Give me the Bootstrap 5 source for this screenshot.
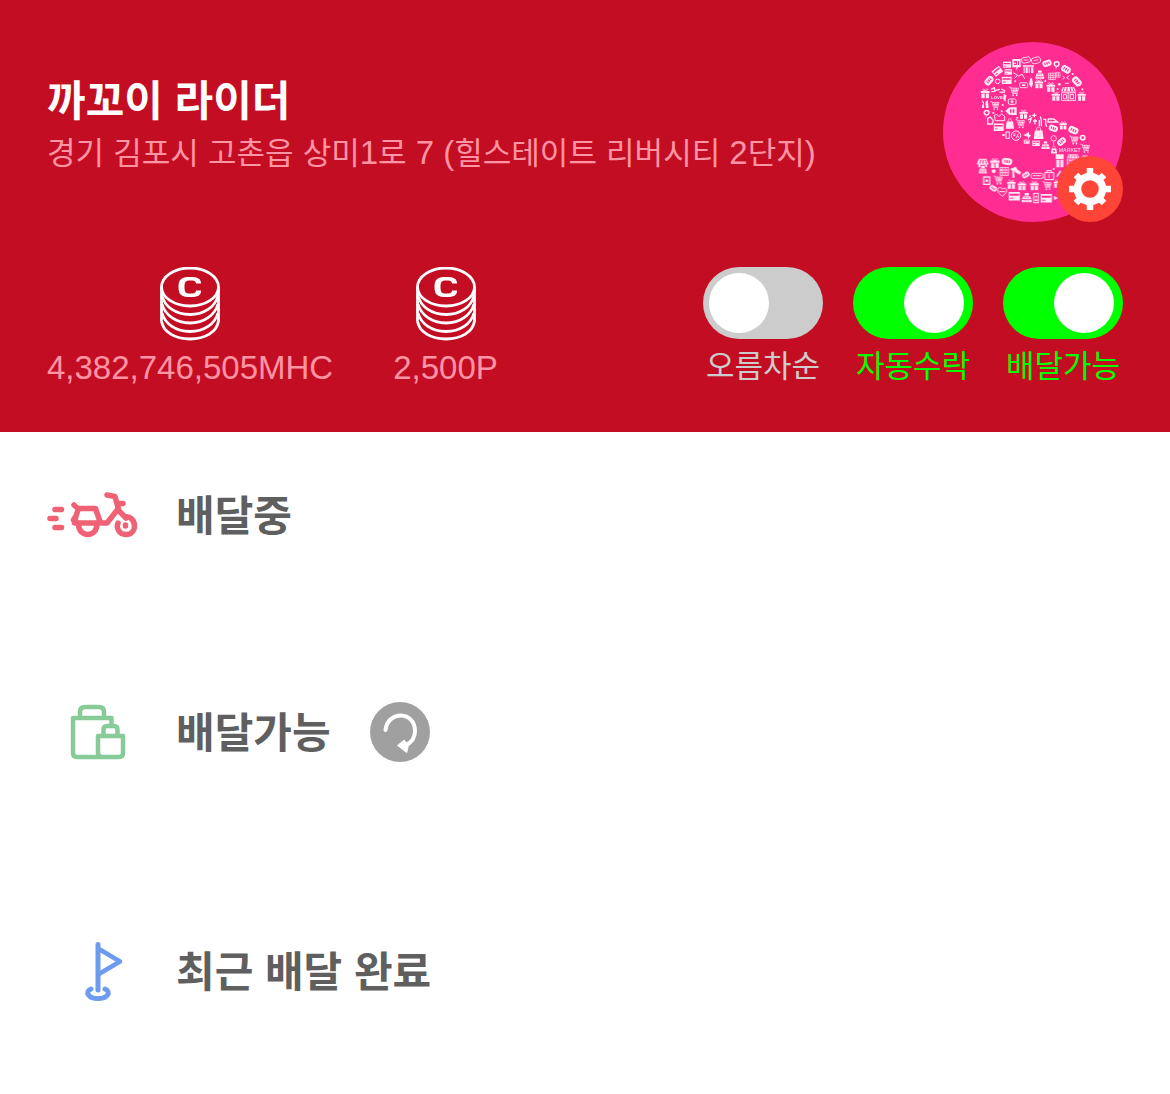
<!DOCTYPE html>
<html lang="ko">
<head>
<meta charset="utf-8">
<meta name="viewport" content="width=device-width, initial-scale=1">
<title>까꼬이 라이더</title>
<link href="https://cdn.jsdelivr.net/npm/bootstrap@5.3.0/dist/css/bootstrap.min.css" rel="stylesheet">
<style>
  body { font-family: "Liberation Sans", "Noto Sans CJK KR", sans-serif; color: #5f5f5f; background: #fff; }
  .rider-header { background: #c30d23; padding: 42px 47px 40px; }
  .rider-title { padding-top: 33px; }
  .rider-name { font-size: 42px; line-height: 54px; font-weight: 700; color: #fff; margin: 0; }
  .rider-info { font-size: 33px; line-height: 48px; color: #ff94a4; margin: 0; }
  .ko { font-size: 31px; line-height: 1; }
  .avatar { width: 180px; height: 180px; }
  .gear-btn { width: 66px; height: 66px; }
  .stat-row { margin-top: 45px; }
  .wallets { gap: 60px; }
  .coin { width: 60px; height: 74px; }
  .wallet-value { line-height: 48px; margin-top: 3px; }
  .toggles { gap: 30px; }
  .toggle-item { width: 120px; }
  .form-check-input.toggle-input { width: 120px; height: 72px; margin: 0; border: 0; border-radius: 36px; background: #ccc; cursor: pointer; }
  .toggle-input::before { content: ""; display: block; width: 60px; height: 60px; margin: 6px; border-radius: 50%; background: #fff; }
  .form-check-input.toggle-input:checked { background: #0f0; }
  .toggle-input:checked::before { margin-left: 51px; }
  .toggle-text { font-size: 31px; line-height: 42px; margin-top: 7px; color: #ccc; white-space: nowrap; }
  .toggle-input:checked + .toggle-text { color: #0f0; }
  .board { padding: 23px 47px 0; }
  .board-section { padding-top: 30px; min-height: 217px; }
  .board-section.has-refresh { min-height: 239px; }
  .board-section:last-child { min-height: 180px; }
  .section-head { height: 60px; gap: 39px; }
  .section-head h2 { font-size: 42px; line-height: 56px; font-weight: 700; margin: 0; padding-top: 4px; }
  .section-icon { width: 90px; height: 60px; }
  .refresh-btn, .refresh-btn svg { width: 60px; height: 60px; }
</style>
<script src="https://cdn.jsdelivr.net/npm/bootstrap@5.3.0/dist/js/bootstrap.bundle.min.js"></script>
</head>
<body>
<svg width="0" height="0" class="position-absolute" aria-hidden="true">
  <symbol id="coins" viewBox="0 0 60 74">
    <g fill="none" stroke="#fff" stroke-width="2.8">
      <ellipse cx="30" cy="20" rx="28.5" ry="19"/>
      <path d="M1.500 20V54C3 65 15 72 30 72S57 65 58.500 54V20"/>
      <path d="M2 29C5 40 16 47.500 30 47.500S55 40 58 29M2 37C5 48 16 56 30 56S55 48 58 37M2 46C5 57 16 64.500 30 64.500S55 57 58 46"/>
    </g>
    <path fill="#fff" d="M30 10C21 10 18.500 12.500 18.500 20S21 30 30 30C38 30 41 28.500 41 23.500H36C36 26 34 26.500 30 26.500C25.500 26.500 24.500 25 24.500 20S25.500 13.500 30 13.500C34 13.500 36 14 36 16.500H41C41 11.500 38 10 30 10Z"/>
  </symbol>
  <symbol id="gift" viewBox="0 0 28 30"><path d="M1 8H27V14H1ZM3 15.500H12.500V29H3ZM15.500 15.500H25V29H15.500Z"/><path d="M14 8C5 8 5 1 10 2C13 3 14 8 14 8C14 8 15 3 18 2C23 1 23 8 14 8" fill="none" stroke="#fff" stroke-width="2"/></symbol>
  <symbol id="cart" viewBox="0 0 30 30"><path d="M1 3H6L11 21H26M7 6H28L25 17H10M13 6L15 17M18 6V17M23 6L21 17M8 12H27" fill="none" stroke="#fff" stroke-width="2.2"/><circle cx="13" cy="26" r="2.5"/><circle cx="23" cy="26" r="2.5"/></symbol>
  <symbol id="card" viewBox="0 0 34 26"><path fill-rule="evenodd" d="M1 1H33V25H1ZM4 6V11H30V6ZM5 17V20H14V17Z"/></symbol>
  <symbol id="bag" viewBox="0 0 28 34"><path d="M4 11H24L27 33H1Z"/><path d="M9 14V6C9 0 19 0 19 6V14" fill="none" stroke="#fff" stroke-width="2"/></symbol>
  <symbol id="coupon" viewBox="0 0 32 22"><path fill-rule="evenodd" d="M9 1H23C34 1 34 21 23 21H9C-2 21-2 1 9 1ZM8 7V15H11V7ZM14 7V15H18V7ZM21 7V15H24V7Z"/></symbol>
  <symbol id="pin" viewBox="0 0 24 30"><path fill-rule="evenodd" d="M12 1C26 1 25 18 12 21L9 29V20C-2 15 0 1 12 1ZM12 6A5 5 0 1 0 12.100 6Z"/></symbol>
  <symbol id="shop" viewBox="0 0 50 46"><path d="M8 1H42L49 15H1Z"/><path d="M3 19H47V44H3ZM24 19V44M9 25H19V38H9ZM30 25H41V38H30Z" fill="none" stroke="#fff" stroke-width="3"/><path d="M12 2L8 15M21 2L19 15M30 2L32 15M38 2L43 15" stroke="#ff2d92" stroke-width="3"/></symbol>
  <symbol id="till" viewBox="0 0 30 30"><path d="M1 22H29V29H1ZM5 12H25L28 20H2ZM9 3H21V10H9Z"/><path d="M8 16H22M8 25H22" stroke="#ff2d92" stroke-width="2" stroke-dasharray="3 2"/></symbol>
  <symbol id="grid" viewBox="0 0 30 28"><path d="M2 2H28V26H2ZM2 10H28M2 18H28M10 2V26M19 2V26" fill="none" stroke="#fff" stroke-width="2.5"/></symbol>
</svg>

<header class="rider-header">
  <div class="d-flex justify-content-between align-items-start">
    <div class="rider-title">
      <h1 class="rider-name">까꼬이 라이더</h1>
      <p class="rider-info"><span class="ko">경기</span> <span class="ko">김포시</span> <span class="ko">고촌읍</span> <span class="ko">상미</span>1<span class="ko">로</span> 7 (<span class="ko">힐스테이트</span> <span class="ko">리버시티</span> 2<span class="ko">단지</span>)</p>
    </div>
    <div class="avatar position-relative flex-shrink-0">
      <svg class="d-block w-100 h-100" viewBox="39 36 540 540" role="img" aria-label="프로필 사진" fill="#fff">
        <circle cx="309" cy="306" r="270" fill="#ff2d92"/>
        <g opacity=".9">
          <use href="#card" x="218" y="94" width="26" height="20"/>
          <path fill-rule="evenodd" d="M247 87H272V112H264L259 121V112H247ZM252 93V98H258V101H252V105H261V93ZM264 93V105H267V93Z"/>
          <g fill="none" stroke="#fff" stroke-width="2.5"><rect x="275" y="82" width="26" height="16" rx="5" transform="rotate(-12 288 90)"/><rect x="304" y="82" width="28" height="18" rx="8" transform="rotate(-15 318 91)"/><path d="M281 90H295M311 92L325 89"/></g>
          <use href="#coupon" x="336" y="87" width="30" height="26" transform="rotate(-18 351 100)"/>
          <use href="#pin" x="368" y="92" width="24" height="28"/>
          <use href="#coupon" x="392" y="106" width="32" height="24" transform="rotate(30 408 118)"/>
          <use href="#coupon" x="424" y="142" width="34" height="25" transform="rotate(48 441 154)"/>
          <path d="M278 106H312V110H278ZM281 112H284V129H281ZM287 112H293V129H287ZM296 112H299V129H296ZM303 112H310V129H303Z"/>
          <use href="#till" x="315" y="119" width="29" height="28"/>
          <use href="#grid" x="354" y="124" width="24" height="30"/><use href="#grid" x="374" y="120" width="18" height="29"/>
          <path d="M398 138L404 143L398 148M418 137L410 143L418 149M405 160H417" fill="none" stroke="#fff" stroke-width="2.5"/>
          <use href="#card" x="187" y="112" width="30" height="24" transform="rotate(-38 202 124)"/>
          <use href="#card" x="222" y="117" width="26" height="18"/>
          <path d="M250 128L267 139L276 132L284 146M254 145L262 136" fill="none" stroke="#fff" stroke-width="3"/>
          <use href="#coupon" x="161" y="139" width="32" height="26" transform="rotate(-48 177 152)"/>
          <circle cx="203" cy="154" r="7" fill="none" stroke="#fff" stroke-width="3"/>
          <use href="#card" x="214" y="139" width="32" height="24"/>
          <rect x="269" y="158" width="24" height="15" rx="4" fill="none" stroke="#fff" stroke-width="2.5"/><path d="M276 163H286V168H276Z"/>
          <path d="M301 145H306L309 162L304 174L297 162Z"/>
          <use href="#gift" x="313" y="147" width="28" height="29"/>
          <use href="#gift" x="347" y="156" width="31" height="30"/>
          <circle cx="256" cy="154" r="3"/><circle cx="346" cy="153" r="3"/><circle cx="428" cy="132" r="3"/><circle cx="388" cy="163" r="4"/><circle cx="457" cy="178" r="3"/><circle cx="383" cy="177" r="3"/>
          <use href="#gift" x="151" y="174" width="29" height="32"/>
          <path d="M183 178L193 173L195 184L184 185M197 181L210 178M214 177L226 183M208 187L225 186" fill="none" stroke="#fff" stroke-width="4"/>
          <use href="#cart" x="235" y="168" width="33" height="32"/>
          <text x="183" y="206" font-size="13" font-weight="700" font-family="Liberation Sans, sans-serif">LOVE</text>
          <path d="M221 192L229 196L226 216L220 207Z"/>
          <rect x="235" y="207" width="23" height="16" rx="4" fill="none" stroke="#fff" stroke-width="3"/><circle cx="246" cy="215" r="4"/>
          <use href="#gift" x="363" y="184" width="29" height="29"/>
          <use href="#shop" x="391" y="170" width="49" height="44"/>
          <use href="#gift" x="441" y="184" width="28" height="29"/>
          <path d="M154 209L162 216V234H155L159 219ZM166 219L173 208L176 234H168Z"/>
          <use href="#cart" x="178" y="212" width="33" height="29"/>
          <use href="#pin" x="158" y="238" width="24" height="28"/>
          <path fill-rule="evenodd" d="M226 243L238 232H260V255H238ZM240 238V248H244V238ZM248 238V248H253V238Z"/>
          <use href="#gift" x="266" y="238" width="29" height="29"/>
          <circle cx="218" cy="225" r="3"/><circle cx="215" cy="244" r="3"/><circle cx="262" cy="263" r="3"/><circle cx="190" cy="249" r="3"/><circle cx="300" cy="259" r="3"/>
          <path d="M173 265L181 261L190 272L187 282H173Z" fill="none" stroke="#fff" stroke-width="4"/>
          <path d="M193 256L200 253L207 260L215 252L224 259V272H196Z" fill="none" stroke="#fff" stroke-width="3"/>
          <use href="#card" x="190" y="278" width="32" height="27"/>
          <use href="#bag" x="226" y="264" width="27" height="33"/>
          <use href="#cart" x="254" y="266" width="33" height="30"/>
          <path d="M313 250V262M307 256H319M294 270L304 264L299 280M309 273H321M315 267V283M328 270V289M331 259L334 272V289M340 268H347V282L350 290M355 267H371L383 276H354ZM371 275H384" fill="none" stroke="#fff" stroke-width="4"/>
          <use href="#coupon" x="355" y="284" width="30" height="22" transform="rotate(20 370 295)"/>
          <use href="#gift" x="387" y="273" width="25" height="26"/>
          <use href="#coupon" x="414" y="289" width="33" height="23" transform="rotate(24 430 300)"/>
          <rect x="228" y="306" width="10" height="19" fill="none" stroke="#fff" stroke-width="3"/><path d="M217 312H224V318H217"/>
          <circle cx="258" cy="317" r="14" fill="none" stroke="#fff" stroke-width="3"/><path d="M250 312H257M250 317H256M265 311L259 323M263 321H268" fill="none" stroke="#fff" stroke-width="3"/>
          <path d="M280 316L297 306V322ZM293 311L303 316L294 327Z"/>
          <use href="#bag" x="310" y="289" width="32" height="39"/>
          <circle cx="371" cy="325" r="8" fill="none" stroke="#fff" stroke-width="2.5"/><path d="M371 333V347" stroke="#fff" stroke-width="2"/>
          <use href="#coupon" x="380" y="323" width="30" height="23" transform="rotate(-42 395 335)"/>
          <use href="#cart" x="416" y="315" width="31" height="30"/>
          <circle cx="458" cy="323" r="9"/><circle cx="458" cy="323" r="4" fill="#ff2d92"/>
          <use href="#card" x="279" y="328" width="22" height="14"/>
          <use href="#card" x="304" y="331" width="28" height="18"/>
          <use href="#till" x="333" y="332" width="27" height="26"/>
          <use href="#bag" x="362" y="346" width="20" height="27"/><circle cx="372" cy="363" r="3" fill="#ff2d92"/>
          <text x="386" y="367" font-size="16" font-family="Liberation Sans, sans-serif">MARKET</text>
          <use href="#cart" x="450" y="340" width="31" height="30"/>
          <path d="M377 373H401V387H377ZM379 389H388V412H379ZM391 389H400V412H391Z"/>
          <use href="#shop" x="404" y="372" width="50" height="36"/>
          <use href="#gift" x="452" y="373" width="26" height="24"/>
          <path d="M147 386H169L176 403H171V412H166V404H151V412H145V403H140Z"/><path d="M153 389L149 401M159 389V401M165 389L169 401" stroke="#ff2d92" stroke-width="3"/>
          <use href="#till" x="145" y="405" width="27" height="26"/>
          <use href="#gift" x="179" y="383" width="31" height="32"/>
          <use href="#coupon" x="214" y="383" width="34" height="23" transform="rotate(8 231 394)"/>
          <use href="#grid" x="207" y="410" width="31" height="28"/>
          <path d="M240 417L257 410L264 421L252 425L254 443H247V424ZM259 417L273 426L270 434L255 427Z"/>
          <circle cx="191" cy="424" r="6"/><circle cx="213" cy="420" r="3"/><circle cx="371" cy="417" r="3"/>
          <rect x="161" y="441" width="18" height="22" fill="none" stroke="#fff" stroke-width="4"/><circle cx="170" cy="452" r="4"/>
          <use href="#cart" x="187" y="435" width="34" height="30"/>
          <use href="#coupon" x="275" y="426" width="25" height="18" transform="rotate(-32 287 435)"/>
          <rect x="303" y="430" width="36" height="16" rx="6" fill="none" stroke="#fff" stroke-width="2.5"/><path d="M309 437H333" stroke="#fff" stroke-width="4" stroke-dasharray="5 2"/>
          <path d="M344 428H371V449H344ZM350 428V422H364V428M357 433V444" fill="none" stroke="#fff" stroke-width="3"/>
          <path d="M392 423L380 440" stroke="#fff" stroke-width="4"/>
          <use href="#gift" x="230" y="448" width="28" height="29"/>
          <use href="#gift" x="261" y="453" width="29" height="29"/>
          <use href="#gift" x="298" y="452" width="30" height="30"/>
          <use href="#cart" x="335" y="452" width="32" height="30"/>
          <use href="#gift" x="370" y="448" width="24" height="27"/>
          <use href="#coupon" x="177" y="466" width="25" height="17" transform="rotate(32 189 475)"/>
          <path d="M216 499C206 490 200 483 204 476S214 473 217 478C221 472 231 475 230 482C229 489 223 494 216 499ZM208 485H225" fill="none" stroke="#fff" stroke-width="3"/>
          <use href="#card" x="235" y="485" width="36" height="28"/>
          <use href="#till" x="274" y="485" width="32" height="34"/>
          <rect x="311" y="490" width="14" height="28" fill="none" stroke="#fff" stroke-width="3"/><circle cx="318" cy="500" r="3"/><path d="M314 508H322V513H314Z"/>
          <use href="#card" x="331" y="491" width="36" height="28"/>
          <path d="M371 498L384 504L373 511"/>
        </g>
      </svg>
      <button type="button" class="gear-btn btn p-0 border-0 rounded-circle position-absolute bottom-0 end-0" aria-label="설정">
        <svg class="d-block w-100 h-100" viewBox="0 0 66 66">
          <circle cx="33" cy="33" r="33" fill="#ff4438"/>
          <g stroke="#fff" fill="none"><circle cx="33" cy="33" r="12.5" stroke-width="7.5"/>
          <path stroke-width="6.5" stroke-linejoin="round" d="M33 12V20M33 46V54M12 33H20M46 33H54M19 19L25 25M41 41L47 47M47 19L41 25M25 41L19 47"/></g>
        </svg>
      </button>
    </div>
  </div>

  <div class="stat-row d-flex justify-content-between align-items-start">
    <div class="wallets d-flex">
      <div class="text-center">
        <svg class="coin d-block mx-auto" aria-hidden="true"><use href="#coins"/></svg>
        <p class="rider-info wallet-value">4,382,746,505MHC</p>
      </div>
      <div class="text-center">
        <svg class="coin d-block mx-auto" aria-hidden="true"><use href="#coins"/></svg>
        <p class="rider-info wallet-value">2,500P</p>
      </div>
    </div>
    <div class="toggles d-flex">
      <div class="toggle-item d-flex flex-column align-items-center">
        <input class="form-check-input toggle-input" type="checkbox" role="switch" id="sortAsc">
        <label class="toggle-text" for="sortAsc">오름차순</label>
      </div>
      <div class="toggle-item d-flex flex-column align-items-center">
        <input class="form-check-input toggle-input" type="checkbox" role="switch" id="autoAccept" checked>
        <label class="toggle-text" for="autoAccept">자동수락</label>
      </div>
      <div class="toggle-item d-flex flex-column align-items-center">
        <input class="form-check-input toggle-input" type="checkbox" role="switch" id="available" checked>
        <label class="toggle-text" for="available">배달가능</label>
      </div>
    </div>
  </div>
</header>

<main class="board">
  <section class="board-section">
    <div class="section-head d-flex align-items-center">
      <svg class="section-icon" viewBox="0 0 90 60" fill="none" stroke="#ef6174" stroke-width="5.5" stroke-linecap="round" stroke-linejoin="round" aria-hidden="true">
        <path d="M8 24.500H14.500M3 33.500H9M8 42.500H14.500"/>
        <path d="M27 20L31 23.500H48.500L53.500 38H60L71 24M31 25L29 31L27.500 38H53.500M29 31L26.500 35"/>
        <path d="M31.500 39C31.500 53 50 53 50 39"/>
        <path d="M60 10L68 11.500L72 26L79 33M70.500 18.500H76"/>
        <path d="M71 38C69 43 72 49.500 79 49.500C84 49.500 87.500 46 87.500 41C87.500 35 83 31 78 32M78.500 40V41"/>
      </svg>
      <h2>배달중</h2>
    </div>
  </section>

  <section class="board-section has-refresh">
    <div class="section-head d-flex align-items-center">
      <svg class="section-icon" viewBox="0 0 90 60" fill="none" stroke="#86cb98" stroke-width="4.5" stroke-linejoin="round" aria-hidden="true">
        <path d="M55 55H30Q26 55 26 51V16H64.500V23M33 16V10Q33 5 38 5H52Q57 5 57 10V16"/>
        <path d="M51 34H76V51Q76 55 72 55H55Q51 55 51 51ZM56.500 34V28Q56.500 24 60 24H67Q70.500 24 70.500 28V34"/>
      </svg>
      <h2>배달가능</h2>
      <button type="button" class="refresh-btn btn p-0 border-0 rounded-circle" aria-label="새로고침">
        <svg class="d-block" viewBox="0 0 60 60">
          <circle cx="30" cy="30" r="30" fill="#a0a0a0"/>
          <path d="M15.500 28C18 8 45 9 45 29C45 36 41 41 35 43.500" fill="none" stroke="#fff" stroke-width="4" stroke-linecap="round"/>
          <path d="M34 38.500L28 43.500L36.500 50L38 44Z" fill="#fff" stroke="#fff" stroke-width="1.5" stroke-linejoin="round"/>
        </svg>
      </button>
    </div>
  </section>

  <section class="board-section">
    <div class="section-head d-flex align-items-center">
      <svg class="section-icon" viewBox="0 0 90 60" fill="none" stroke="#6c9bef" stroke-width="5" stroke-linecap="round" stroke-linejoin="round" aria-hidden="true">
        <path d="M51 3.500V49" /><path d="M52 8L73 20.500L52 33" stroke-width="4.5"/>
        <path d="M44 48C37 51 42 57.500 51 57.500S65 51 58 48"/>
      </svg>
      <h2>최근 배달 완료</h2>
    </div>
  </section>
</main>
</body>
</html>
